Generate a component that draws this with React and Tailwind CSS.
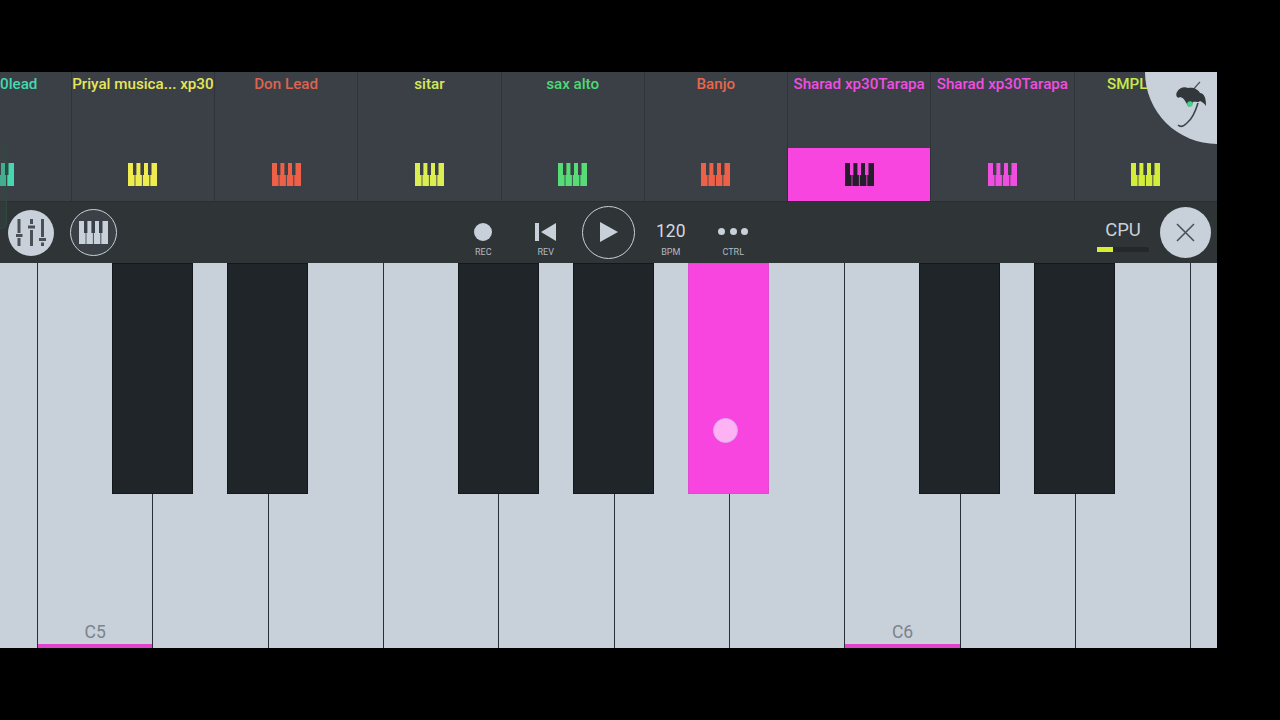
const channels = [
  { name: "0lead", color: "text-[#45d8b0]", icon: "#45d8b0", first: true },
  { name: "Priyal musica... xp30", color: "text-[#e6e65a]", icon: "#f0ec4e" },
  { name: "Don Lead", color: "text-[#dc6450]", icon: "#ee6048" },
  { name: "sitar", color: "text-[#d6e85c]", icon: "#dcee52" },
  { name: "sax alto", color: "text-[#4fd878]", icon: "#58dc78" },
  { name: "Banjo", color: "text-[#e8664e]", icon: "#ee6048" },
  { name: "Sharad xp30Tarapa", color: "text-[#f04ee0]", icon: "#241e2a", active: true },
  { name: "Sharad xp30Tarapa", color: "text-[#f04ee0]", icon: "#f04ee0" },
  { name: "SMPL Lead", color: "text-[#cce84c]", icon: "#d4ec3a" },
];

const whiteKeys = [
  { width: "w-[38px]" },
  { label: "C5" },
  {},
  {},
  {},
  {},
  {},
  {},
  { label: "C6" },
  {},
  {},
  { width: "w-[30px]" },
];

const blackKeys = [
  { left: "left-[112px]" },
  { left: "left-[227px]" },
  { left: "left-[458px]" },
  { left: "left-[573px]" },
  { left: "left-[688px]", pressed: true },
  { left: "left-[919px]" },
  { left: "left-[1034px]" },
];

function PianoIcon({ color, className }) {
  return (
    <svg width="29" height="23" viewBox="0 0 29 23" className={className}>
      <path
        fill={color}
        d="M0 0H5V12H6.6V23H0ZM8.4 0H12.4V12H13.9V23H7.4V12H8.4ZM16 0H20V12H21.4V23H14.8V12H16ZM23.5 0H29V23H22.3V12H23.5Z"
      />
    </svg>
  );
}

function ChannelCell({ channel }) {
  return (
    <div className="relative flex h-full w-[143.25px] shrink-0 flex-col border-r border-[#2f3439]">
      <div
        className={`h-[76px] overflow-hidden whitespace-nowrap pt-[3px] text-[15.2px] font-medium leading-[19px] ${channel.color} ${
          channel.first ? "pl-[71.5px] text-left" : "text-center"
        }`}
      >
        {channel.name}
      </div>
      <div className={`flex h-[53px] items-center justify-center ${channel.active ? "bg-[#f945e0]" : ""}`}>
        <PianoIcon color={channel.icon} />
      </div>
    </div>
  );
}

function MixerIcon() {
  return (
    <svg width="30" height="30" viewBox="0 0 30 30">
      <g fill="#4a5056">
        <rect x="1.5" y="1" width="3" height="14" />
        <rect x="0" y="16" width="6.5" height="3" />
        <rect x="1.5" y="20" width="3" height="8" />
        <rect x="14" y="1" width="3" height="5" />
        <rect x="12" y="7.5" width="7" height="3" />
        <rect x="14" y="12" width="3" height="16" />
        <rect x="25" y="1" width="3" height="18" />
        <rect x="23" y="20" width="7" height="3" />
        <rect x="25" y="24.5" width="3" height="3.5" />
      </g>
    </svg>
  );
}

function TransportItem({ label, children }) {
  return (
    <div className="flex w-[62.5px] flex-col items-center pt-[12px]">
      <div className="flex h-[24px] items-center justify-center">{children}</div>
      <span className="mt-[2px] text-[9px] leading-[12px] text-[#b4bac2]">{label}</span>
    </div>
  );
}

function FruitLogo() {
  return (
    <svg width="52" height="60" viewBox="0 0 52 60" className="absolute right-0 top-[3px]">
      <path d="M35 7C31 11 29 13 28 16" fill="none" stroke="#4a5056" strokeWidth="1.2" />
      <path d="M33 28C30 38 27 44 22 48C19 51 16 53 13 50" fill="none" stroke="#3f454b" strokeWidth="1.6" />
      <path
        fill="#32373c"
        d="M12 17C14 13 19 11 23 13C28 12 33 14 35 18C39 18 41 23 41 31C39 28 37 27 35 26C33 28 30 26 28 27C26 32 23 33 22 29C20 26 19 23 15 22C14 23 13 23 12 22C11 20 11 19 12 17Z"
      />
      <circle cx="25" cy="29" r="2.8" fill="#3ed68a" />
    </svg>
  );
}

function WhiteKey({ keyData }) {
  return (
    <div className={`relative flex h-full shrink-0 flex-col justify-end border-r border-[#2a2f36] bg-[#c8d0da] ${keyData.width || "w-[115.35px]"}`}>
      {keyData.label && (
        <>
          <span className="pb-[2px] text-center text-[17.5px] leading-[20px] text-[#7d838d]">{keyData.label}</span>
          <div className="h-[4px] bg-[#e243cb]" />
        </>
      )}
    </div>
  );
}

export default function App() {
  return (
    <div className="h-[720px] w-[1280px] overflow-hidden bg-black pt-[72px] font-['Roboto',sans-serif]">
      <div className="relative h-[576px] w-[1217px] overflow-hidden">
        <div className="flex h-[129px] -ml-[71.5px] bg-[#3a4045]">
          {channels.map((channel, i) => (
            <ChannelCell key={i} channel={channel} />
          ))}
        </div>

        <div className="flex h-[62px] items-center border-t border-[#2a2e32] bg-[#2f3437] pl-[8px] pr-[6px]">
          <div className="flex h-[46px] w-[46px] items-center justify-center rounded-full bg-[#c8d0da]">
            <MixerIcon />
          </div>
          <div className="ml-[16px] flex h-[47px] w-[47px] items-center justify-center rounded-full border border-[#c8d0da] bg-[#3a4045]">
            <PianoIcon color="#c8d0da" />
          </div>

          <div className="ml-[335px] flex items-center">
            <TransportItem label="REC">
              <div className="h-[18px] w-[18px] rounded-full bg-[#c8d0da]" />
            </TransportItem>
            <TransportItem label="REV">
              <svg width="21" height="18" viewBox="0 0 21 18">
                <path fill="#c8d0da" d="M0 0H4V18H0ZM21 0V18L6 9Z" />
              </svg>
            </TransportItem>
            <div className="-mt-[1px] flex w-[62.5px] justify-center">
              <div className="flex h-[53px] w-[53px] items-center justify-center rounded-full border border-[#c8d0da]">
                <svg width="18" height="20" viewBox="0 0 18 20" className="ml-[2px]">
                  <path fill="#c8d0da" d="M0 0L18 10L0 20Z" />
                </svg>
              </div>
            </div>
            <TransportItem label="BPM">
              <span className="text-[17.5px] text-[#d3d8e0]">120</span>
            </TransportItem>
            <TransportItem label="CTRL">
              <div className="flex gap-[4.5px]">
                <div className="h-[7px] w-[7px] rounded-full bg-[#c8d0da]" />
                <div className="h-[7px] w-[7px] rounded-full bg-[#c8d0da]" />
                <div className="h-[7px] w-[7px] rounded-full bg-[#c8d0da]" />
              </div>
            </TransportItem>
          </div>

          <div className="ml-auto flex items-center gap-[11px]">
            <div className="flex w-[52px] flex-col items-center pt-[5px]">
              <span className="text-[18.5px] leading-[22px] text-[#c8d0da]">CPU</span>
              <div className="mt-[6px] h-[5px] w-[52px] rounded-sm bg-[#24282b]">
                <div className="h-full w-[16px] bg-[#d8ee34]" />
              </div>
            </div>
            <div className="flex h-[51px] w-[51px] items-center justify-center rounded-full bg-[#c8d0da]">
              <svg width="19" height="19" viewBox="0 0 19 19" className="-ml-[1px]">
                <path d="M1 1L18 18M18 1L1 18" stroke="#4a5056" strokeWidth="1.6" fill="none" />
              </svg>
            </div>
          </div>
        </div>

        <div className="relative flex h-[385px] bg-[#c8d0da]">
          {whiteKeys.map((keyData, i) => (
            <WhiteKey key={i} keyData={keyData} />
          ))}
          {blackKeys.map((keyData) => (
            <div
              key={keyData.left}
              className={`absolute top-0 h-[231px] w-[81px] border ${keyData.left} ${
                keyData.pressed ? "border-[#e04ad0] bg-[#f945e0]" : "border-[#15181a] bg-[#1f2528]"
              }`}
            />
          ))}
          <div className="absolute left-[713px] top-[155px] h-[25px] w-[25px] rounded-full border border-[#dba6f5] bg-[#fdb2f4]" />
        </div>

        <div className="absolute -left-[4px] top-[71px] h-[86px] w-[11px] rounded-md border border-[#2f4a40] bg-[#3a4a46]/30" />
        <div className="absolute right-0 top-0 h-[72px] w-[72px] rounded-bl-full bg-[#c8d0da]" />
        <FruitLogo />
      </div>
    </div>
  );
}
